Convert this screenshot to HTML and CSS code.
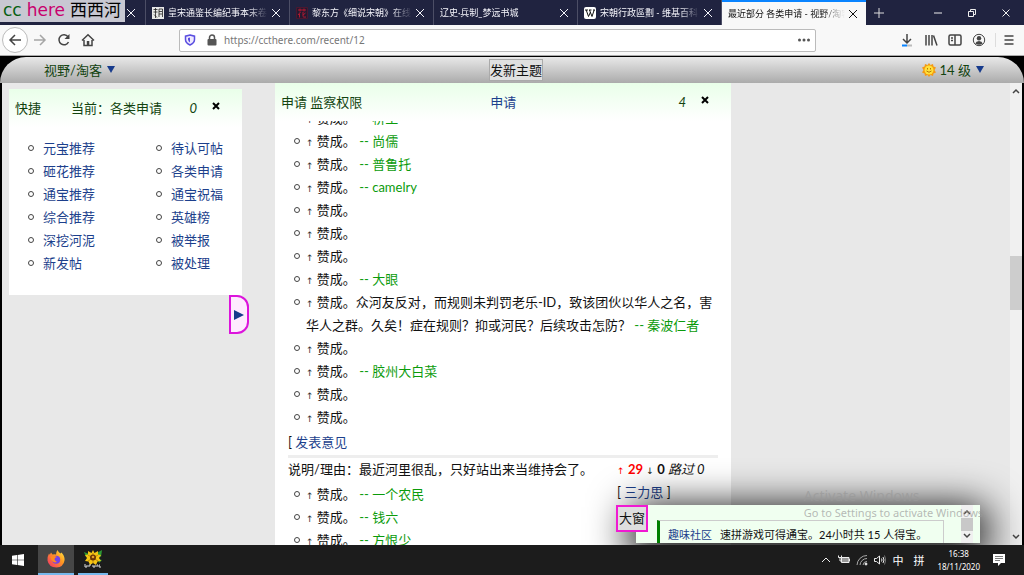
FILE: index.html
```html
<!DOCTYPE html>
<html lang="zh-CN">
<head>
<meta charset="utf-8">
<title>最近部分 各类申请 - 视野/淘客</title>
<link rel="stylesheet" href="styles.css">
</head>
<body>
<header class="tabs">
  <div class="tab first"><span class="tab-title"></span><button class="x" aria-label="关闭"><svg viewBox="0 0 8 8"><path d="M0 0l8 8M8 0l-8 8"/></svg></button></div>
  <div class="tab"><svg class="fav" viewBox="0 0 12 12"><path fill="#e8e8e8" d="M0 0h12v12H0z"/><path d="M1.500 2.500h4M3.500 1v10M1.500 5h4M2 7.500l3 3M7 2h3.500v8M7 2v8M7 4.500h3M7 7h3" fill="none" stroke="#222" stroke-width=".8"/></svg><span class="tab-title">皇宋通鉴长编纪事本末卷</span><button class="x" aria-label="关闭"><svg viewBox="0 0 8 8"><path d="M0 0l8 8M8 0l-8 8"/></svg></button></div>
  <div class="tab"><svg class="fav" viewBox="0 0 12 12"><path d="M.5.5h11v11H.5z" fill="#241a30" stroke="#4a1830"/><path d="M2 3h8M4 1.500v3M8 1.500v3M4.500 5L2 8M3.500 7v3.500M7 5v4.500q0 1 3 .5M9.500 6L7 8" fill="none" stroke="#b01830"/></svg><span class="tab-title">黎东方《细说宋朝》在线</span><button class="x" aria-label="关闭"><svg viewBox="0 0 8 8"><path d="M0 0l8 8M8 0l-8 8"/></svg></button></div>
  <div class="tab"><span class="tab-title">辽史·兵制_梦远书城</span><button class="x" aria-label="关闭"><svg viewBox="0 0 8 8"><path d="M0 0l8 8M8 0l-8 8"/></svg></button></div>
  <div class="tab"><svg class="fav" viewBox="0 0 12 12"><rect width="12" height="12" rx="2" fill="#fff"/><path d="M1 3h3M5 3h2.500M9 3h2M2.200 3L4.500 9.500 6.500 5M5.500 3L8 9.500 10.200 3" fill="none" stroke="#111"/></svg><span class="tab-title">宋朝行政區劃 - 维基百科</span><button class="x" aria-label="关闭"><svg viewBox="0 0 8 8"><path d="M0 0l8 8M8 0l-8 8"/></svg></button></div>
  <div class="tab active"><span class="tab-title">最近部分 各类申请 - 视野/淘客</span><button class="x" aria-label="关闭"><svg viewBox="0 0 8 8"><path d="M0 0l8 8M8 0l-8 8"/></svg></button></div>
  <button class="new-tab" aria-label="新标签"><svg viewBox="0 0 12 12"><path d="M6 1v10M1 6h10"/></svg></button>
  <div class="win">
    <button aria-label="最小化"><svg viewBox="0 0 10 10"><path d="M1 5h8"/></svg></button>
    <button aria-label="还原"><svg viewBox="0 0 10 10"><path d="M1.500 3.500h5v5h-5zM3.500 3V1.500h5v5H7"/></svg></button>
    <button aria-label="关闭窗口"><svg viewBox="0 0 10 10"><path d="M1.500 1.500l7 7M8.500 1.500l-7 7"/></svg></button>
  </div>
  <div class="logo"><span class="cc">cc</span><span class="here">here</span><span>西西河</span></div>
</header>

<nav class="toolbar">
  <button class="back" aria-label="后退"><svg viewBox="0 0 14 14"><path d="M13 7H2M7 2L2 7l5 5"/></svg></button>
  <button class="tool dim" aria-label="前进"><svg viewBox="0 0 14 14"><path d="M1 7h11M7 2l5 5-5 5"/></svg></button>
  <button class="tool" aria-label="刷新"><svg viewBox="0 0 14 14"><path d="M11.500 9A5 5 0 1 1 11 3.800"/><path d="M12.500 1v5h-5z" fill="#444" stroke="none"/></svg></button>
  <button class="tool" aria-label="主页"><svg viewBox="0 0 14 14"><path d="M1 7.500L7 1.700l6 5.800M3 7v5.500h8V7"/><path d="M5.800 8h2.500v4.500H5.800z" fill="#444" stroke="none"/></svg></button>
  <div class="address">
    <svg class="shield" viewBox="0 0 12 12"><path d="M6 1l4.500 1.200v3.300Q10.500 9 6 11 1.500 9 1.500 5.500V2.200z" fill="#efeaff" stroke="#5a4ee0" stroke-width="1.500"/><path d="M6 3.500v5Q4.200 7.500 4 5.500V4z" fill="#5a4ee0"/></svg>
    <svg class="lock" viewBox="0 0 12 12"><rect x="1.500" y="5" width="9" height="6.500" rx="1" fill="#555"/><path d="M3.500 5V3.500a2.500 2.500 0 0 1 5 0V5" fill="none" stroke="#555" stroke-width="1.500"/></svg>
    <input type="text" aria-label="网址" value="https://ccthere.com/recent/12">
    <svg class="dots" viewBox="0 0 14 14"><circle cx="2.500" cy="7" r="1.500"/><circle cx="7" cy="7" r="1.500"/><circle cx="11.500" cy="7" r="1.500"/></svg>
  </div>
  <div class="tools">
    <button class="tool" aria-label="下载"><svg viewBox="0 0 14 14"><path d="M7 1v9M3 6l4 4 4-4"/><path d="M2 12.500h5" stroke="#0a84ff" stroke-width="2"/><path d="M7 12.500h5" stroke="#bbb" stroke-width="2"/></svg></button>
    <button class="tool" aria-label="书库"><svg viewBox="0 0 14 14"><path d="M2 2v10.500M5 2v10.500M8 2v10.500M9.500 2.500l3.500 10"/></svg></button>
    <button class="tool" aria-label="侧栏"><svg viewBox="0 0 14 14"><rect x="1" y="2" width="12" height="10" rx="1.500"/><path d="M7 2v10M3 5h2M3 7.500h2" /></svg></button>
    <button class="tool" aria-label="账户"><svg viewBox="0 0 14 14"><circle cx="7" cy="7" r="5.700" stroke-width="1"/><circle cx="7" cy="5.300" r="2.200" fill="#444" stroke="none"/><path d="M3.300 10.500Q4 8 7 8t3.700 2.500Q7 13 3.300 10.500" fill="#444" stroke="none"/></svg></button>
    <button class="tool menu" aria-label="菜单"><svg viewBox="0 0 14 14"><path d="M2.500 3h9M2.500 7h9M2.500 11h9"/></svg></button>
  </div>
</nav>

<div class="top-wrap">
  <div class="topbar">
    <button class="drop">视野/淘客<svg viewBox="0 0 8 8"><path d="M0 0h8L4 7z"/></svg></button>
    <button class="new-topic">发新主题</button>
    <button class="drop level"><svg class="sun" viewBox="0 0 14 14"><path d="M7 0l1.500 2L11 1l.5 2.500L14 4.500 12.500 7 14 9.500l-2.500 1L11 13l-2.500-1L7 14l-1.500-2L3 13l-.5-2.500L0 9.500 1.500 7 0 4.500l2.500-1L3 1l2.500 1z" fill="#f59a12"/><circle cx="7" cy="7" r="4.500" fill="#ffe23a"/><path d="M5.500 5v1.500M8.500 5v1.500M4.500 8q2.500 2.500 5 0" fill="none" stroke="#a65a00" stroke-width=".8"/></svg>14 级<svg viewBox="0 0 8 8"><path d="M0 0h8L4 7z"/></svg></button>
  </div>
</div>

<main class="page">
  <aside class="side">
    <section class="quick">
      <header class="card-head"><span>快捷</span><span class="current">当前：各类申请</span><i>0</i><button class="close" aria-label="关闭"><svg viewBox="0 0 8 8"><path d="M1 1l6 6M7 1l-6 6"/></svg></button></header>
      <div class="links">
        <ul>
          <li><a href="#">元宝推荐</a></li><li><a href="#">砸花推荐</a></li><li><a href="#">通宝推荐</a></li><li><a href="#">综合推荐</a></li><li><a href="#">深挖河泥</a></li><li><a href="#">新发帖</a></li>
        </ul>
        <ul>
          <li><a href="#">待认可帖</a></li><li><a href="#">各类申请</a></li><li><a href="#">通宝祝福</a></li><li><a href="#">英雄榜</a></li><li><a href="#">被举报</a></li><li><a href="#">被处理</a></li>
        </ul>
      </div>
    </section>
    <button class="expand" aria-label="展开"><svg viewBox="0 0 10 10"><path d="M0 0l10 5-10 5z"/></svg></button>
  </aside>

  <article class="thread">
    <header class="card-head"><span>申请 监察权限</span><a class="kind" href="#">申请</a><i>4</i><button class="close" aria-label="关闭"><svg viewBox="0 0 8 8"><path d="M1 1l6 6M7 1l-6 6"/></svg></button></header>
    <div class="scroll">
      <ul class="votes">
        <li><b>↑</b> 赞成。 <a href="#">-- 桥生</a></li>
        <li><b>↑</b> 赞成。 <a href="#">-- 尚儒</a></li>
        <li><b>↑</b> 赞成。 <a href="#">-- 普鲁托</a></li>
        <li><b>↑</b> 赞成。 <a href="#">-- camelry</a></li>
        <li><b>↑</b> 赞成。</li>
        <li><b>↑</b> 赞成。</li>
        <li><b>↑</b> 赞成。</li>
        <li><b>↑</b> 赞成。 <a href="#">-- 大眼</a></li>
        <li><b>↑</b> 赞成。众河友反对，而规则未判罚老乐-ID，致该团伙以华人之名，害华人之群。久矣！症在规则？抑或河民？后续攻击怎防？ <a href="#">-- 秦波仁者</a></li>
        <li><b>↑</b> 赞成。</li>
        <li><b>↑</b> 赞成。 <a href="#">-- 胶州大白菜</a></li>
        <li><b>↑</b> 赞成。</li>
        <li><b>↑</b> 赞成。</li>
      </ul>
      <p class="comment">[ <a href="#">发表意见</a></p>
      <div class="reason">
        <div class="reason-main">
          <p>说明/理由：最近河里很乱，只好站出来当维持会了。</p>
          <ul class="votes">
            <li><b>↑</b> 赞成。 <a href="#">-- 一个农民</a></li>
            <li><b>↑</b> 赞成。 <a href="#">-- 钱六</a></li>
            <li><b>↑</b> 赞成。 <a href="#">-- 方恨少</a></li>
          </ul>
        </div>
        <div class="tally">
          <p><span class="up"><b>↑</b> <strong>29</strong></span> <b>↓</b> <strong>0</strong> <i>路过 0</i></p>
          <p>[ <a href="#">三力思</a> ]</p>
        </div>
      </div>
    </div>
  </article>

  <div class="scrollbar"><svg viewBox="0 0 8 8"><path d="M1 6l3-3 3 3"/></svg><div class="thumb"></div><svg viewBox="0 0 8 8"><path d="M1 2l3 3 3-3"/></svg></div>

  <section class="popup">
    <button class="big">大窗</button>
    <div class="notice"><a href="#">趣味社区</a><span>速拼游戏可得通宝。24小时共 15 人得宝。</span></div>
    <div class="mini-scroll"><svg viewBox="0 0 8 8"><path d="M1 6l3-3 3 3"/></svg><div class="mini-thumb"></div><svg viewBox="0 0 8 8"><path d="M1 2l3 3 3-3"/></svg></div>
  </section>
  <div class="activate"><p class="big-line">Activate Windows</p><p>Go to Settings to activate Windows.</p></div>
</main>

<footer class="taskbar">
  <button class="start" aria-label="开始"><svg viewBox="0 0 12 12"><path fill="#fff" d="M0 1.700L5 1v4.700H0zM5.600.9L12 0v5.700H5.600zM0 6.300h5V11l-5-.7zM5.600 6.300H12V12l-6.400-.9z"/></svg></button>
  <button class="app firefox" aria-label="Firefox"><svg viewBox="0 0 18 18"><defs><linearGradient id="fx" x1="1" y1="0" x2="0" y2="1"><stop offset="0" stop-color="#fff04a"/><stop offset=".4" stop-color="#ff9a20"/><stop offset="1" stop-color="#f02a70"/></linearGradient></defs><path d="M10.500 0q1 2.500 3 3.500l1-1q3.500 4 3 8-1 6.500-8 7Q1.500 17 .5 10.500 0 7 2 3.500l.8 1.200L4 2.500l1.500 2q2-.5 3.500 0 0-2.500 1.500-4.500z" fill="url(#fx)"/><circle cx="9.200" cy="9.800" r="4" fill="#7542e5"/><path d="M3.500 7Q7 5 10 7 7.500 7.500 7.500 9T10 12q-5 2-6.500-5z" fill="#ff8a20"/></svg></button>
  <button class="app flower" aria-label="向日葵"><svg viewBox="0 0 18 18"><path d="M11 4l7-4-1 7zM0 2l5 2-3 3zM14 9l4 1-3 3z" fill="#2c9a35"/><path d="M9 0l1.500 3L14 1v3.500l3 .5-2 3 2 3-3.500.5L12 15l-3-2-3 2-1.500-3.500L1 11l2-3-2-3 3-.5V1l3.500 2z" fill="#f6c514"/><path d="M9 3v10M4 5l10 6M14 5L4 11" stroke="#a87408" stroke-width=".7"/><circle cx="9" cy="7.500" r="3" fill="#6b3507"/><circle cx="9" cy="7" r="1.300" fill="#e4a028"/><path d="M1 14v3h2v-2M5 17v-2h2M9 15v2h2v-2M13 17v-2h1M16 15h-1v2h2" fill="none" stroke="#ddd"/></svg></button>
  <div class="tray">
    <svg viewBox="0 0 12 12"><path d="M2 8l4-4 4 4"/></svg>
    <svg viewBox="0 0 12 12"><path d="M3.500 3.500h7.500v5H3.500z" fill="#999"/><path d="M.5 1.500v2h3v-2M2 4v3h2M11.500 5v2"/></svg>
    <svg viewBox="0 0 12 12"><path d="M1 11A10 10 0 0 1 11 1.500M4 11a7 7 0 0 1 7-6.500M7 11a4 4 0 0 1 4-3.500" stroke="#aaa"/><circle cx="10" cy="10" r="1" fill="#eee"/></svg>
    <svg viewBox="0 0 12 12"><path d="M.5 4.500h2L5.500 2v8L2.500 7.500h-2zM7.500 4.500q1 1.500 0 3M9 3q2 3 0 6"/><path d="M10.500 1.500q2.500 4.500 0 9" stroke="#777"/></svg>
    <span>中</span><span class="ime">拼</span>
    <time>16:38<br>18/11/2020</time>
    <svg class="note" viewBox="0 0 12 12"><path d="M0 0h12v9H8l-3 3V9H0z" fill="#fff" stroke="none"/><path d="M2 2.500h8M2 4.500h8M2 6.500h5" stroke="#444" stroke-width=".7"/></svg>
  </div>
</footer>
</body>
</html>
```
FILE: styles.css
```css
* { box-sizing: border-box; }
body {
  margin: 0;
  height: 100vh;
  display: flex;
  flex-direction: column;
  overflow: hidden;
  background: #000;
  color: #111;
  font: 13px/23px Lato, "Noto Sans CJK SC", sans-serif;
}
button { padding: 0; border: 0; background: none; color: inherit; font: inherit; }
button, svg { flex: none; }
svg { display: block; }
p, ul { margin: 0; padding: 0; }
a { color: #1c3f8c; text-decoration: none; }

/* Browser tabs */
.tabs { position: relative; display: flex; flex: none; height: 25px; background: #202340; color: #f4f4fa; }
.tab {
  flex: 0 1 144px;
  min-width: 0;
  display: flex;
  align-items: center;
  gap: 4px;
  padding: 0 9px 0 6px;
  border-right: 1px solid #4c4e66;
  font-size: 9px;
}
.tab.first { flex-basis: 146px; padding-right: 10px; }
.tab-title {
  flex: 1;
  min-width: 0;
  overflow: hidden;
  white-space: nowrap;
  -webkit-mask-image: linear-gradient(90deg, #000 80%, transparent);
  mask-image: linear-gradient(90deg, #000 80%, transparent);
}
.tab.active { border: 0; border-top: 2px solid #0a84ff; background: #f8f8f8; color: #111; }
.fav { width: 12px; height: 12px; }
.x svg { width: 8px; height: 8px; stroke: currentColor; fill: none; }
.new-tab { padding: 0 7px; }
.new-tab svg { width: 12px; height: 12px; stroke: #ddd; fill: none; }
.win { display: flex; gap: 24px; margin-left: auto; padding-right: 13px; }
.win svg { width: 10px; height: 10px; stroke: #eee; fill: none; stroke-width: 1; }
.logo {
  position: absolute;
  left: 0;
  top: 0;
  display: flex;
  gap: 5px;
  width: 125px;
  height: 22px;
  padding-left: 3px;
  background: #c8c8d2;
  color: #000;
  font: 17px/20px "DejaVu Sans", "Noto Sans CJK SC", sans-serif;
}
.cc { color: #065f12; }
.here { color: #c8006e; }

/* Browser toolbar */
.toolbar { display: flex; flex: none; align-items: center; height: 31px; padding: 0 8px 0 2px; background: #f8f8f8; border-bottom: 1px solid #aaa; }
.toolbar svg { width: 14px; height: 14px; fill: none; stroke: #444; stroke-width: 1.5; }
.back { display: flex; align-items: center; justify-content: center; width: 26px; height: 26px; border: 1px solid #bbb; border-radius: 50%; background: #fff; }
.tool { padding: 0 5px; }
.dim { opacity: .45; }
.address { display: flex; align-items: center; flex: 1; height: 23px; margin: 0 79px 0 79px; padding: 0 4px; border: 1px solid #bbb; border-radius: 2px; background: #fff; }
.toolbar .shield, .toolbar .lock { width: 12px; height: 12px; stroke: none; }
.toolbar .lock { margin-left: 10px; }
.toolbar .dots { fill: #555; stroke: none; }
.address input { flex: 1; min-width: 0; margin-left: 6px; padding: 0; border: 0; outline: 0; background: none; color: #777; font: 10px/18px "Noto Sans", sans-serif; }
.tools { display: flex; }
.tools .menu { margin-left: 4px; padding: 0 0 0 6px; border-left: 1px solid #ddd; }

/* Site top bar */
.top-wrap { flex: none; padding-top: 1px; background: #000; }
.topbar {
  display: grid;
  grid-template-columns: 1fr auto 1fr;
  align-items: center;
  height: 26px;
  padding: 0 40px 0 44px;
  border-radius: 26px 26px 0 0;
  background: linear-gradient(#e8e8e8, #ababab);
  color: #12430f;
}
.drop { display: flex; align-items: center; gap: 5px; }
.drop svg { width: 8px; height: 8px; fill: #173b8c; }
.drop .sun { width: 14px; height: 14px; margin-right: -1px; }
.level { justify-self: end; }
.new-topic { height: 22px; margin-left: 4px; padding: 0; border: 1px solid #aaa; background: #e0e0e0; color: #111; line-height: 20px; }

/* Page body */
.page { position: relative; display: flex; flex: 1; min-height: 0; margin: 0 2px; overflow: hidden; background: #e8e8e8; }
.side { flex: none; width: 247px; padding: 6px 0 0 7px; }
.quick { width: 233px; padding-bottom: 20px; background: #fff; }
.card-head { display: flex; align-items: center; height: 38px; padding: 0 22px 0 6px; background: linear-gradient(#e9ffe9, #fff); color: #12430f; }
.current { margin-left: 30px; }
.card-head i { margin-left: auto; }
.close { margin: 0 0 5px 15px; }
.close svg { width: 8px; height: 8px; fill: none; stroke: #000; stroke-width: 2; }
.links { display: flex; gap: 22px; padding: 10px 0 0 34px; }
.links ul { flex: none; width: 106px; }
ul { list-style: none; }
li::before {
  content: "";
  float: left;
  width: 6px;
  height: 6px;
  margin: 8px 0 0 -15px;
  border: 1px solid #444;
  border-radius: 50%;
  box-sizing: border-box;
}
.expand { display: flex; align-items: center; width: 20px; height: 39px; margin-left: 220px; padding-left: 3px; border: 2px solid #dc14dc; border-radius: 0 12px 12px 0; background: #ffeaff; }
.expand svg { width: 10px; height: 10px; fill: #173b8c; }

.thread { display: flex; flex-direction: column; flex: none; width: 456px; margin-left: 26px; background: #fff; }
.thread .card-head { position: relative; z-index: 1; flex: none; }
.kind { margin-left: 128px; }
.scroll { flex: 1; min-height: 0; margin-top: -14px; padding: 0 13px; overflow: hidden; }
.votes { padding-left: 18px; }
.votes li::before { margin-left: -12px; }
.votes b, .tally b { font: 9px/9px "DejaVu Sans", sans-serif; }
.votes b { color: #333; }
.votes a { color: #0b9b0b; }
.comment { padding: 2px 0 1px; border-bottom: 3px solid #eee; }
.reason { display: flex; }
.reason-main { flex: none; width: 329px; }
.reason .votes { padding-top: 2px; }
.tally { white-space: nowrap; }
.up { color: #f00; }

.scrollbar { display: flex; flex-direction: column; align-items: center; width: 12px; margin-left: auto; padding: 4px 0; background: #f0f0f0; }
.scrollbar svg, .mini-scroll svg { width: 8px; height: 8px; fill: none; stroke: #444; stroke-width: 1.5; }
.thumb { width: 100%; height: 54px; margin: 161px 0 auto; background: #cdcdcd; }

/* Floating notice */
.popup { position: absolute; z-index: 2; right: 42px; bottom: 2px; display: flex; width: 344px; height: 38px; padding-left: 21px; background: #f0fff0; box-shadow: 0 8px 40px 6px #000; font-size: 11px; }
.big { position: absolute; left: -20px; top: 0; height: 27px; padding: 0 1px; border: 2px solid #f01ad2; background: #dedede; font-size: 13px; }
.notice { display: flex; gap: 8px; width: 287px; margin-top: 15px; padding: 2px 0 0 8px; border: 1px solid #ccc; border-width: 1px 1px 0 0; border-left: 3px solid #008000; white-space: nowrap; overflow: hidden; }
.mini-scroll { display: flex; flex-direction: column; align-items: center; justify-content: space-between; width: 12px; margin: 0 7px 0 auto; padding: 3px 0; background: #f0f0f0; }
.mini-thumb { width: 12px; height: 13px; background: #c8c8c8; }
.activate { position: absolute; z-index: 3; right: 36px; bottom: 23px; color: #999999b0; font: 11px/18px "Noto Sans", sans-serif; pointer-events: none; }
.activate .big-line { font-size: 14px; line-height: 17px; }

/* Desktop taskbar */
.taskbar { display: flex; flex: none; height: 30px; background: #1c1c1c; color: #fff; }
.start { width: 36px; }
.start svg { width: 12px; height: 12px; margin: auto; }
.app { border-bottom: 2px solid #76b9ed; }
.app svg { width: 18px; height: 18px; margin: auto; }
.firefox { width: 36px; margin-left: 2px; background: #464646; }
.flower { width: 30px; margin-left: 4px; }
.tray { display: flex; align-items: center; gap: 6px; margin-left: auto; padding-right: 19px; font-size: 11px; }
.tray svg { width: 12px; height: 12px; fill: none; stroke: #eee; }
.ime { margin-left: 4px; }
.tray time { margin: 0 7px; font: 8px/13px "Noto Sans", sans-serif; text-align: center; }
```
